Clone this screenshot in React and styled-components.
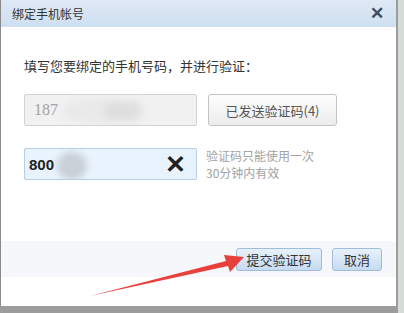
import React from "react";
import styled, { createGlobalStyle } from "styled-components";

const Global = createGlobalStyle`
  html, body { margin: 0; padding: 0; }
  body {
    width: 404px;
    height: 313px;
    overflow: hidden;
    background: #9c9c9c;
    font-family: "Noto Sans CJK SC", "Liberation Sans", sans-serif;
  }
`;

const Screen = styled.div`
  position: relative;
  width: 404px;
  height: 313px;
  display: flex;
  background: linear-gradient(90deg, #9c9c9c 0, #9c9c9c 398px, #d6dcd6 398px);
`;

const Dialog = styled.div`
  width: 395px;
  height: 306px;
  background: #fff;
  border-left: 1px solid #8a8a8a;
  display: flex;
  flex-direction: column;
`;

const TitleBar = styled.div`
  height: 27px;
  flex: none;
  display: flex;
  align-items: center;
  justify-content: space-between;
  padding: 0 12px 0 11px;
  background: linear-gradient(180deg, #dfe9f5, #cddff1);
  font-size: 12px;
  color: #333;
`;

const Close = styled.span`
  font-family: "Liberation Sans", sans-serif;
  font-size: 17px;
  font-weight: bold;
  color: #3d4f66;
  line-height: 1;
`;

const Body = styled.div`
  flex: 1;
  display: flex;
  flex-direction: column;
  padding: 29px 0 0 23px;
`;

const Intro = styled.div`
  font-size: 13px;
  color: #333;
  line-height: 20px;
  margin-bottom: 18px;
`;

const Row = styled.div`
  display: flex;
  align-items: center;
  gap: 11px;
  margin-bottom: 21px;
`;

const Field = styled.div`
  position: relative;
  box-sizing: border-box;
  width: 173px;
  height: 32px;
  display: flex;
  align-items: center;
  padding: 0 ${(p) => (p.$active ? "4px" : "9px")};
  border: 1px solid ${(p) => (p.$active ? "#b5cfe6" : "#d2d2d2")};
  border-radius: 2px;
  background: ${(p) => (p.$active ? "#e9f3fd" : "#f1f1f1")};
  overflow: hidden;
`;

const Digits = styled.span`
  position: relative;
  z-index: 1;
  font-family: ${(p) => (p.$bold ? '"Liberation Sans", sans-serif' : '"Liberation Serif", serif')};
  font-size: ${(p) => (p.$bold ? "15px" : "16px")};
  font-weight: ${(p) => (p.$bold ? "bold" : "normal")};
  color: ${(p) => (p.$bold ? "#222" : "#a3a3a3")};
`;

const Blur = styled.span`
  position: absolute;
  top: ${(p) => p.$top}px;
  left: ${(p) => p.$left}px;
  width: ${(p) => p.$w}px;
  height: ${(p) => p.$h}px;
  border-radius: ${(p) => p.$r || "50%"};
  background: ${(p) => p.$color};
  filter: blur(3px);
`;

const ClearX = styled.span`
  margin-left: auto;
  margin-right: 6px;
  font-family: "Liberation Sans", sans-serif;
  font-size: 25px;
  font-weight: bold;
  color: #222;
  line-height: 1;
`;

const SentButton = styled.div`
  box-sizing: border-box;
  width: 129px;
  height: 32px;
  display: flex;
  align-items: center;
  justify-content: center;
  border: 1px solid #c3c3c3;
  border-radius: 3px;
  background: linear-gradient(180deg, #fdfdfd, #ececec);
  font-size: 13px;
  color: #555;
`;

const Hint = styled.div`
  font-size: 12px;
  line-height: 17px;
  color: #a2a2a2;
  margin-left: -2px;
`;

const Footer = styled.div`
  height: 36px;
  flex: none;
  margin-bottom: 29px;
  display: flex;
  align-items: center;
  justify-content: flex-end;
  gap: 10px;
  padding-right: 14px;
  background: #f5f7fa;
`;

const Btn = styled.div`
  box-sizing: border-box;
  height: 23px;
  width: ${(p) => p.$w}px;
  display: flex;
  align-items: center;
  justify-content: center;
  border: 1px solid #9fbcd8;
  border-radius: 3px;
  background: linear-gradient(180deg, #e8f1fb, #c6dbf1);
  font-size: 13px;
  color: #333;
`;

const Arrow = styled.svg`
  position: absolute;
  left: 0;
  top: 0;
  pointer-events: none;
`;

export default function App() {
  return (
    <>
      <Global />
      <Screen>
        <Dialog>
          <TitleBar>
            <span>绑定手机帐号</span>
            <Close>✕</Close>
          </TitleBar>
          <Body>
            <Intro>填写您要绑定的手机号码，并进行验证：</Intro>
            <Row>
              <Field>
                <Digits>187</Digits>
                <Blur $top={3} $left={38} $w={82} $h={26} $color="#e9e9e9" />
                <Blur $top={8} $left={80} $w={34} $h={16} $r="4px" $color="#dedede" />
              </Field>
              <SentButton>已发送验证码(4)</SentButton>
            </Row>
            <Row>
              <Field $active>
                <Digits $bold>800</Digits>
                <Blur $top={3} $left={32} $w={30} $h={28} $color="#c9d0d8" />
                <ClearX>✕</ClearX>
              </Field>
              <Hint>
                验证码只能使用一次
                <br />
                30分钟内有效
              </Hint>
            </Row>
          </Body>
          <Footer>
            <Btn $w={86}>提交验证码</Btn>
            <Btn $w={50}>取消</Btn>
          </Footer>
        </Dialog>
        <Arrow width="404" height="313" viewBox="0 0 404 313">
          <polygon
            points="90,296 226,261 224,255 244,257 230,272 228,266"
            fill="#e8403a"
          />
        </Arrow>
      </Screen>
    </>
  );
}
